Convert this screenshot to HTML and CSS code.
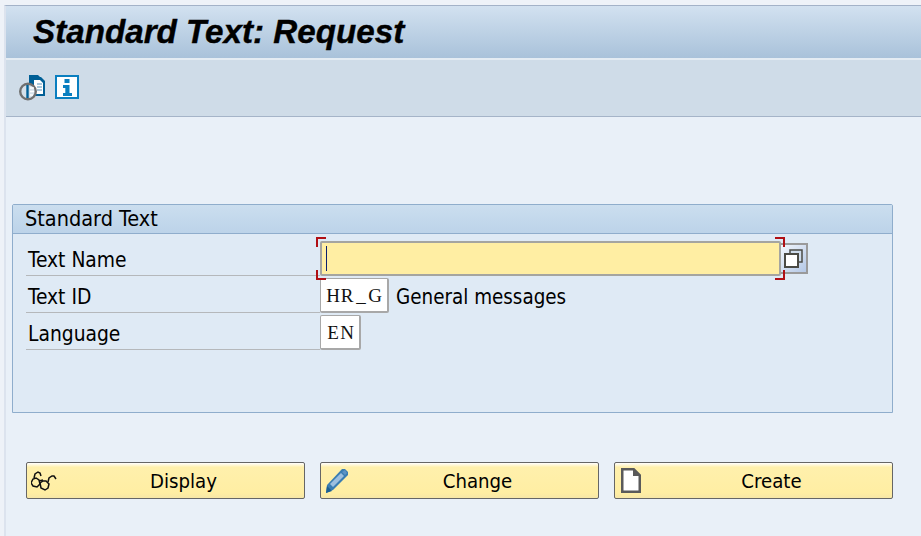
FILE: index.html
```html
<!DOCTYPE html>
<html lang="en">

<head>
    <meta charset="UTF-8">
    <meta name="viewport" content="width=device-width, initial-scale=1.0">
    <title>Standard Text: Request</title>
    <link rel="stylesheet" href="styles.css">
</head>

<body>

    <div class="window">
        <header class="title-bar">
            <h1>Standard Text: Request</h1>
        </header>

        <div class="toolbar">
            <a href="#" class="tool-link" title="Documents">
                <svg width="30" height="26" viewBox="0 0 30 26">
                    <path d="M10 0h9l2 2h1l4 4v15H13v-2h-3z" fill="#005f96"/>
                    <path d="M15 5h6l3 3v11h-9z" fill="#fff"/>
                    <path d="M18 9h5M18 12h5M18 15h5" stroke="#8fb6cf" stroke-width="1.500"/>
                    <circle cx="9" cy="16.500" r="7.800" fill="#d6e1ea" stroke="#707070" stroke-width="2.400"/>
                    <path d="M8.500 10v13" stroke="#005f96" stroke-width="2.400"/>
                    <path d="M11 13h4M11 16.500h4M11 20h3" stroke="#fff" stroke-width="1.500"/>
                </svg>
            </a>
            <a href="#" class="tool-link" title="Information">
                <svg width="24" height="24" viewBox="0 0 24 24">
                    <rect x="1" y="1" width="22" height="22" fill="#fff" stroke="#0a7fc0" stroke-width="2"/>
                    <path d="M9.500 4h5v4h-5zM8 10h6.500v8H17v3H8v-3h2.300v-5H8z" fill="#0a7fc0"/>
                </svg>
            </a>
        </div>

        <main class="content">
            <section class="group-box">
                <h2>Standard Text</h2>
                <div class="group-body">
                    <div class="form-row">
                        <label for="textName">Text Name</label>
                        <div class="focus-field">
                            <input type="text" id="textName" class="field-main">
                            <span class="caret"></span>
                            <span class="corner corner-tl"></span>
                            <span class="corner corner-tr"></span>
                            <span class="corner corner-bl"></span>
                            <span class="corner corner-br"></span>
                        </div>
                        <button type="button" class="value-help" title="Multiple selection">
                            <svg width="20" height="19" viewBox="0 0 20 19">
                                <rect x="6" y="1" width="12" height="12" fill="#cfdcec" stroke="#4a4a44" stroke-width="1.500"/>
                                <rect x="1" y="5" width="13" height="13" fill="#fff" stroke="#4a4a44" stroke-width="2"/>
                            </svg>
                        </button>
                    </div>
                    <div class="form-row">
                        <label>Text ID</label>
                        <div class="mono-field field-id"><span>H</span><span>R</span><span>_</span><span>G</span></div>
                        <span class="field-note">General messages</span>
                    </div>
                    <div class="form-row">
                        <label>Language</label>
                        <div class="mono-field field-lang"><span>E</span><span>N</span></div>
                    </div>
                </div>
            </section>

            <div class="actions">
                <button type="button" class="action-btn">
                    <svg class="btn-icon" width="28" height="26" viewBox="0 0 28 26">
                        <path d="M2 11 0 15l2 3 4 1 3-3-1-4-3-2zM3 10l1-4 3-2 2 1 1 3" fill="none" stroke="#111" stroke-width="1.500"/>
                        <path d="M9 15l1 5 4 2 3-2 1-4-3-3-3 0z" fill="none" stroke="#111" stroke-width="1.500"/>
                        <path d="M8 13l4-1M17 14l1-4 3-2h2l2 3" fill="none" stroke="#111" stroke-width="1.500"/>
                    </svg>
                    Display
                </button>
                <button type="button" class="action-btn">
                    <svg class="btn-icon" width="24" height="26" viewBox="0 0 24 26">
                        <path d="M17 1h3l3 3v3L8 22l-7 3 1-8z" fill="#3a7db2"/>
                        <path d="M16 5l3 3L8 19l-3-3z" fill="#9dbfdf"/>
                        <path d="M20 2l2 3-2 2-3-3z" fill="#5d93c4"/>
                        <path d="M2 18l5 5-6 2z" fill="#1b5f92"/>
                    </svg>
                    Change
                </button>
                <button type="button" class="action-btn">
                    <svg class="btn-icon" width="24" height="26" viewBox="0 0 24 26">
                        <path d="M3.250 1.250h11.500l6 6v16.500H3.250z" fill="#fff" stroke="#5a5a5a" stroke-width="2.500"/>
                        <path d="M14 1l8 7h-8z" fill="#5a5a5a"/>
                    </svg>
                    Create
                </button>
            </div>
        </main>
    </div>

</body>

</html>
```

FILE: styles.css
```css
/* Resetting basic styles */
* {
    margin: 0;
    padding: 0;
    box-sizing: border-box;
}

html,
body {
    height: 100%;
    overflow: hidden;
}

body {
    background: #eef2f8;
    font-family: 'DejaVu Sans Condensed', 'DejaVu Sans', sans-serif;
    font-stretch: condensed;
    color: #000;
    padding: 5px 0 0 4px;
}

.window {
    height: 100%;
    background: #e9f0f8;
    border-left: 2px solid #dce3ee;
    border-top: 1px solid #a3b2c8;
}

/* Title bar */
.title-bar {
    height: 54px;
    padding-left: 27px;
    background: linear-gradient(180deg, #d2e1f0, #a9c2da);
    border-bottom: 2px solid #e4ecf3;
    display: flex;
    align-items: center;
}

.title-bar h1 {
    font-family: 'Liberation Sans', sans-serif;
    font-size: 33.200px;
    font-weight: bold;
    font-style: italic;
    -webkit-text-stroke: 0.4px #000;
    white-space: nowrap;
}

.toolbar {
    height: 57px;
    padding: 15px 0 0 13px;
    background: #cfdce8;
    border-bottom: 1px solid #a5b4c8;
    display: flex;
    align-items: flex-start;
    gap: 6px;
}

.tool-link {
    display: block;
    height: 26px;
}

/* Group box */
.content {
    padding: 87px 28px 0 6px;
}

.group-box {
    height: 209px;
    background: #dfeaf5;
    border: 1px solid #8fadcc;
    border-radius: 2px 2px 0 0;
}

.group-box h2 {
    height: 29px;
    padding-left: 12px;
    font-size: 21.500px;
    font-weight: 400;
    line-height: 27px;
    background: linear-gradient(180deg, #cbdeef, #bcd3e9);
    border-bottom: 1px solid #8fadcc;
}

.group-body {
    padding: 5px 0 0 13px;
}

.form-row {
    height: 37px;
    display: flex;
    align-items: flex-end;
}

.form-row label {
    width: 294px;
    height: 37px;
    padding: 9px 0 0 2px;
    font-size: 20.800px;
    line-height: 25px;
    border-bottom: 1px solid #b5b8bb;
    flex-shrink: 0;
}

/* Fields */
.focus-field {
    position: relative;
    width: 461px;
    height: 35px;
}

.field-main {
    display: block;
    width: 100%;
    height: 100%;
    background: #ffeea3;
    border: 2px solid #a5a5a0;
    border-radius: 2px;
    outline: none;
}

.caret {
    position: absolute;
    left: 6px;
    top: 5px;
    width: 1px;
    height: 25px;
    background: #0a1f6e;
}

.corner {
    position: absolute;
    width: 10px;
    height: 10px;
    border: 0 solid #b00f14;
}

.corner-tl {
    left: -4px;
    top: -4px;
    border-width: 2px 0 0 2px;
}

.corner-tr {
    right: -4px;
    top: -4px;
    border-width: 2px 2px 0 0;
}

.corner-bl {
    left: -4px;
    bottom: -4px;
    border-width: 0 0 2px 2px;
}

.corner-br {
    right: -4px;
    bottom: -4px;
    border-width: 0 2px 2px 0;
}

.value-help {
    width: 27px;
    height: 31px;
    margin-bottom: 2px;
    background: linear-gradient(135deg, #f2f6fc, #b4c8e6);
    border: 2px solid #9a9a9a;
    border-left: none;
    display: flex;
    align-items: center;
    justify-content: center;
}

.mono-field {
    height: 35px;
    padding-left: 5px;
    background: #fff;
    border: 1px solid #a8a8a8;
    border-right-width: 2px;
    border-bottom-width: 2px;
    border-radius: 2px;
    font-family: 'Liberation Serif', serif;
    font-size: 19px;
    line-height: 33px;
    color: #111;
    display: flex;
}

.mono-field span {
    width: 14px;
    text-align: center;
}

.field-id {
    width: 69px;
}

.field-lang {
    width: 41px;
}

.field-note {
    margin-left: 7px;
    height: 37px;
    padding-top: 3px;
    font-size: 20.400px;
    line-height: 36px;
}

/* Buttons */
.actions {
    display: grid;
    grid-template-columns: repeat(3, 279px);
    gap: 15px;
    margin-top: 49px;
    padding-left: 14px;
}

.action-btn {
    position: relative;
    height: 37px;
    padding-left: 36px;
    background: linear-gradient(180deg, #fff 0, #fff0ac 12%, #ffeea3 85%, #f7e7a6 100%);
    border: 1px solid #666;
    border-radius: 2px;
    font-family: 'DejaVu Sans Condensed', 'DejaVu Sans', sans-serif;
    font-stretch: condensed;
    font-size: 20.200px;
    color: #000;
}

.btn-icon {
    position: absolute;
    left: 4px;
    top: 5px;
}
```
